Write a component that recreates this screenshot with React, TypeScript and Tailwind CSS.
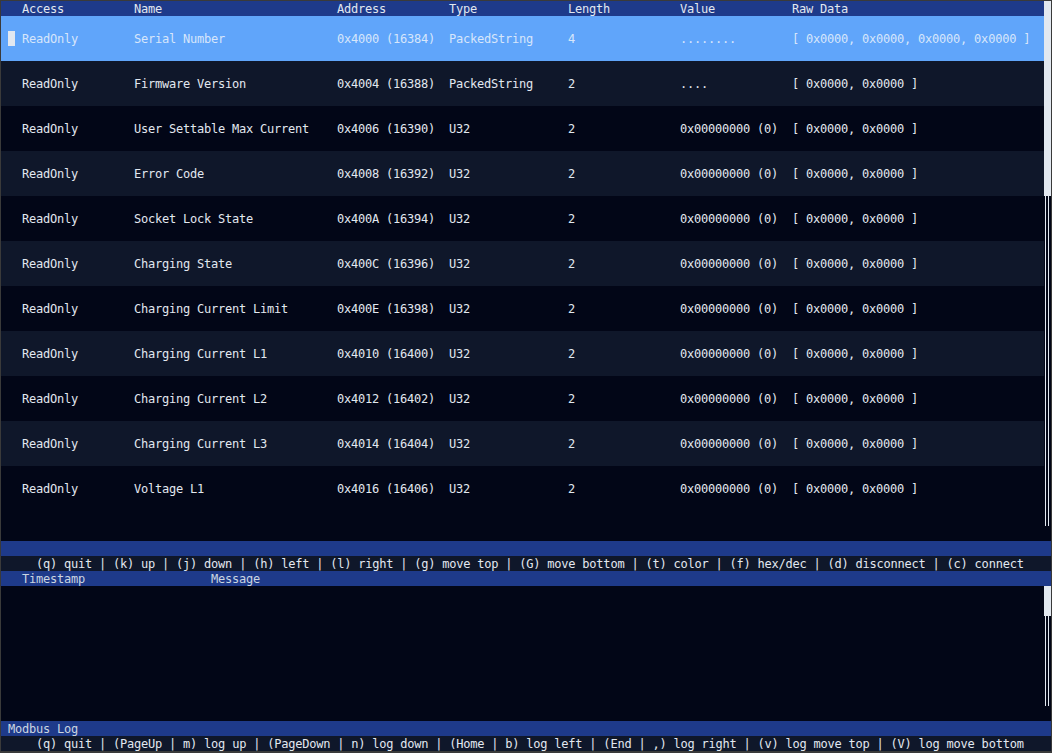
import React from "react";

// Terminal-style Modbus register browser. Everything sits on a 7x15px cell grid.

interface Register {
  name: string;
  address: string;
  type: string;
  length: string;
  value: string;
  raw: string;
}

const RAW2 = "[ 0x0000, 0x0000 ]";
const U32 = "0x00000000 (0)";

const registers: Register[] = [
  { name: "Serial Number", address: "0x4000 (16384)", type: "PackedString", length: "4", value: "........", raw: "[ 0x0000, 0x0000, 0x0000, 0x0000 ]" },
  { name: "Firmware Version", address: "0x4004 (16388)", type: "PackedString", length: "2", value: "....", raw: RAW2 },
  { name: "User Settable Max Current", address: "0x4006 (16390)", type: "U32", length: "2", value: U32, raw: RAW2 },
  { name: "Error Code", address: "0x4008 (16392)", type: "U32", length: "2", value: U32, raw: RAW2 },
  { name: "Socket Lock State", address: "0x400A (16394)", type: "U32", length: "2", value: U32, raw: RAW2 },
  { name: "Charging State", address: "0x400C (16396)", type: "U32", length: "2", value: U32, raw: RAW2 },
  { name: "Charging Current Limit", address: "0x400E (16398)", type: "U32", length: "2", value: U32, raw: RAW2 },
  { name: "Charging Current L1", address: "0x4010 (16400)", type: "U32", length: "2", value: U32, raw: RAW2 },
  { name: "Charging Current L2", address: "0x4012 (16402)", type: "U32", length: "2", value: U32, raw: RAW2 },
  { name: "Charging Current L3", address: "0x4014 (16404)", type: "U32", length: "2", value: U32, raw: RAW2 },
  { name: "Voltage L1", address: "0x4016 (16406)", type: "U32", length: "2", value: U32, raw: RAW2 },
];

const COLS = "grid grid-cols-[21px_112px_203px_112px_119px_112px_112px_1fr]";

function ScrollTrack({ height }: { height: string }) {
  return (
    <div className={`${height} w-[7px]`}>
      <div className="ml-[1px] h-full w-[4px] border-x border-[#e2e8f0]" />
    </div>
  );
}

function HelpLine({ text }: { text: string }) {
  return (
    <div className="h-[15px] bg-[#0f172a] pl-[35px] pt-[1px] text-[#e2e8f0]">{text}</div>
  );
}

export default function App() {
  return (
    <div className="h-[753px] w-[1052px] bg-[#3a3a3a] pb-[2px] pl-[1px] pr-[1px] pt-[1px] font-['DejaVu_Sans_Mono',monospace] text-[12px] leading-[15px] tracking-[-0.22px] whitespace-pre">
      <div className="flex h-[750px] flex-col bg-[#020617]">
        {/* register table */}
        <div className="flex h-[540px]">
          <div className="w-[1043px]">
            <div className={`${COLS} h-[15px] bg-[#1e3a8a] pt-[1px] text-[#e2e8f0]`}>
              <div />
              <div>Access</div>
              <div>Name</div>
              <div>Address</div>
              <div>Type</div>
              <div>Length</div>
              <div>Value</div>
              <div>Raw Data</div>
            </div>
            {registers.map((r, i) => {
              const selected = i === 0;
              const bg = selected ? "bg-[#60a5fa] text-[#d7e6fb]" : i % 2 === 1 ? "bg-[#0f172a] text-[#e2e8f0]" : "bg-[#020617] text-[#e2e8f0]";
              return (
                <div key={r.address} className={`${COLS} h-[45px] pb-[14px] pt-[16px] ${bg}`}>
                  <div className="pl-[7px]">
                    {selected && <div className="-mt-[1px] h-[15px] w-[7px] bg-[#e2e8f0]" />}
                  </div>
                  <div>ReadOnly</div>
                  <div>{r.name}</div>
                  <div>{r.address}</div>
                  <div>{r.type}</div>
                  <div>{r.length}</div>
                  <div>{r.value}</div>
                  <div>{r.raw}</div>
                </div>
              );
            })}
          </div>
          <div className="flex w-[7px] flex-col">
            <div className="h-[195px] bg-[#e2e8f0]" />
            <ScrollTrack height="h-[330px]" />
          </div>
        </div>

        <div className="h-[15px] bg-[#1e3a8a]" />
        <HelpLine text="(q) quit | (k) up | (j) down | (h) left | (l) right | (g) move top | (G) move bottom | (t) color | (f) hex/dec | (d) disconnect | (c) connect" />

        {/* modbus log */}
        <div className="flex h-[15px] bg-[#1e3a8a] pl-[21px] pt-[1px] text-[#cbd5e1]">
          <div className="w-[189px]">Timestamp</div>
          <div>Message</div>
        </div>
        <div className="flex h-[135px]">
          <div className="w-[1043px]" />
          <div className="flex w-[7px] flex-col">
            <div className="h-[30px] bg-[#e2e8f0]" />
            <ScrollTrack height="h-[90px]" />
          </div>
        </div>
        <div className="h-[15px] bg-[#1e3a8a] pl-[7px] pt-[1px] text-[#cbd5e1]">Modbus Log</div>
        <HelpLine text="(q) quit | (PageUp | m) log up | (PageDown | n) log down | (Home | b) log left | (End | ,) log right | (v) log move top | (V) log move bottom" />
      </div>
    </div>
  );
}
